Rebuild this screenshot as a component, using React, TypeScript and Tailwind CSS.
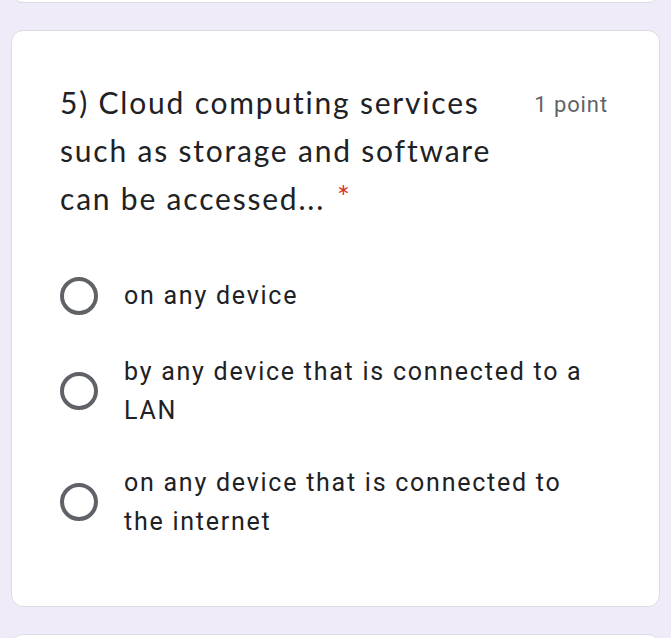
import React from "react";

function Radio() {
  return (
    <div className="w-[38px] h-[38px] rounded-full border-[4px] border-[#5f6368] shrink-0" />
  );
}

const options = [
  { text: "on any device", mt: "mt-[54px]" },
  { text: "by any device that is connected to a LAN", mt: "mt-[36px]" },
  { text: "on any device that is connected to the internet", mt: "mt-[32px]" },
];

export default function App() {
  return (
    <div className="w-[671px] h-[638px] bg-[#f0ebf8] overflow-hidden flex flex-col gap-[27px] px-[11px]" style={{ fontFamily: "Roboto, sans-serif" }}>
      <div className="-mt-[100px] h-[103px] bg-white border border-[#dadce0] rounded-[12px] shrink-0" />
      <div className="bg-white border border-[#dadce0] rounded-[12px] shrink-0 h-[577px] pl-[48px] pr-[51px] pt-[47px]">
        <div className="flex items-start justify-between">
          <div className="w-[450px] text-[30px] leading-[48px] tracking-[1.8px] text-[#202124]" style={{ fontFamily: "Lato, sans-serif" }}>
            5) Cloud computing services such as storage and software can be accessed...
            <span className="text-[#d93025] ml-[12px] relative -top-[2px]">*</span>
          </div>
          <div className="text-[22px] leading-[48px] tracking-[0.9px] text-[#5f6368] shrink-0 mt-[3px]">1 point</div>
        </div>
        <div className="flex flex-col">
          {options.map((o, i) => (
            <div key={i} className={`flex items-center ${o.mt}`}>
              <div className="w-[64px] flex">
                <Radio />
              </div>
              <div className="text-[25px] leading-[39.5px] tracking-[1.75px] text-[#202124] w-[468px]">{o.text}</div>
            </div>
          ))}
        </div>
      </div>
      <div className="h-[100px] bg-white border border-[#dadce0] rounded-[12px] shrink-0" />
    </div>
  );
}
